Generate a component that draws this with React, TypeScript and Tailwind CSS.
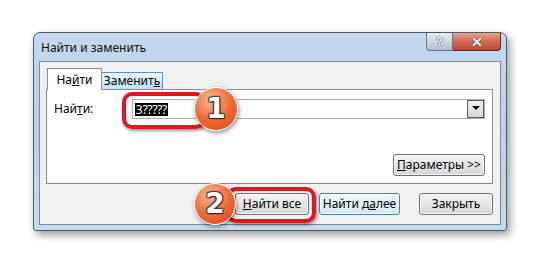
import React from "react";

const font = { fontFamily: '"Noto Sans", "Open Sans", sans-serif' };

function WinButton({
  children,
  focused = false,
  className = "",
}: {
  children: React.ReactNode;
  focused?: boolean;
  className?: string;
}) {
  return (
    <div
      className={`flex items-center justify-center h-[22px] rounded-[3px] border text-[12px] text-black leading-none ${
        focused
          ? "border-[#3c7fb1] bg-gradient-to-b from-[#f3f9fd] via-[#e4f1fb] to-[#d3e8f7]"
          : "border-[#707070] bg-gradient-to-b from-[#f4f4f4] via-[#e8e8e8] to-[#d4d4d4]"
      } shadow-[inset_0_0_0_1px_rgba(255,255,255,0.8)] ${className}`}
    >
      {children}
    </div>
  );
}

function Badge({ n, className }: { n: string; className: string }) {
  return (
    <div
      className={`absolute rounded-full border-[1.5px] border-white bg-[radial-gradient(circle_at_38%_28%,#fcb894_0%,#f26a35_50%,#d8471b_100%)] shadow-[1px_2px_4px_rgba(0,0,0,0.45)] flex items-center justify-center ${className}`}
    >
      <span
        className="text-white font-bold text-[28px] leading-none [text-shadow:0_0_1px_#222,1px_1px_1px_#222,-1px_-1px_1px_#444,1px_-1px_1px_#444,-1px_1px_1px_#444]"
        style={{ fontFamily: '"DejaVu Sans", sans-serif' }}
      >
        {n}
      </span>
    </div>
  );
}

export default function App() {
  return (
    <div className="relative w-[540px] h-[264px] bg-white overflow-hidden" style={font}>
      <div className="pt-[32px] pl-[33px]">
        {/* window */}
        <div className="w-[474px] h-[199px] flex flex-col rounded-t-[7px] rounded-b-[3px] border border-[#4f5966] bg-gradient-to-b from-[#c3d8ee] via-[#b9d0e9] to-[#c6dbef] shadow-[3px_4px_9px_rgba(0,0,0,0.4)]">
          <div className="h-[28px] flex justify-between pl-[7px] pr-[5px]">
            <span className="mt-[6px] text-[12px] text-[#111]">Найти и заменить</span>
            <div className="flex h-[18px]">
              <div className="w-[27px] flex items-center justify-center rounded-bl-[4px] border border-t-0 border-[#6a7584] bg-gradient-to-b from-[#e7edf3] via-[#cdd6e0] to-[#b3bfcc]">
                <span className="text-[13px] font-bold leading-none text-[#f4f6f8] [text-shadow:0_0_1px_#333,0_0_1px_#333]">?</span>
              </div>
              <div className="w-[48px] flex items-center justify-center rounded-br-[4px] border border-l-0 border-t-0 border-[#5a2a22] bg-gradient-to-b from-[#e6a68d] via-[#d06a52] to-[#c24530]">
                <span className="text-[14px] font-bold leading-none text-white [text-shadow:0_0_1px_#222,0_0_1px_#222]">✕</span>
              </div>
            </div>
          </div>

          {/* client area */}
          <div className="mx-[5px] h-[164px] border border-[#7b8898] bg-[#f0f0f0] flex flex-col">
            <div className="pt-[6px] pl-[6px]">
              <div className="flex items-end h-[21px] pl-[1px] relative z-10">
                <div className="h-[22px] w-[55px] -mb-px border border-b-0 border-[#898c95] bg-white flex items-center justify-center text-[12px] text-black">
                  <span>
                    На<span className="underline">й</span>ти
                  </span>
                </div>
                <div className="h-[17px] w-[61px] border border-l-0 border-b-0 border-[#5d8fb8] bg-gradient-to-b from-[#eef7fd] via-[#d6eefc] to-[#bde4f9] flex items-center justify-center text-[12px] text-black">
                  <span>
                    Замени<span>т</span><span className="underline">ь</span>
                  </span>
                </div>
              </div>
              <div className="w-[447px] h-[95px] border border-[#898c95] bg-white flex flex-col px-[7px] pt-[9px]">
                <div className="flex items-center h-[20px]">
                  <span className="w-[78px] text-[12px] text-black">
                    Най<span className="underline">т</span>и:
                  </span>
                  <div className="w-[354px] h-[20px] border border-[#abadb3] bg-white flex items-center justify-between pl-[2px]">
                    <span className="bg-black text-white text-[12px] leading-[13px] px-[1px] tracking-[-0.3px]">3?????</span>
                    <div className="w-[17px] h-[18px] border border-[#5a5a5a] bg-gradient-to-b from-[#f2f2f2] to-[#d6d6d6] flex items-start justify-center pt-[5px]">
                      <div className="w-0 h-0 border-l-[4px] border-r-[4px] border-t-[4px] border-l-transparent border-r-transparent border-t-black" />
                    </div>
                  </div>
                </div>
                <div className="flex justify-end mt-[35px]">
                  <WinButton className="w-[92px] h-[19px]">
                    <span>
                      <span className="underline">П</span>араметры &gt;&gt;
                    </span>
                  </WinButton>
                </div>
              </div>
            </div>

            <div className="flex justify-end pr-[7px] mt-[9px]">
              <WinButton className="w-[74px]">
                <span>
                  <span className="underline">Н</span>айти все
                </span>
              </WinButton>
              <WinButton focused className="w-[81px] ml-[10px]">
                <span>
                  Найти д<span className="underline">а</span>лее
                </span>
              </WinButton>
              <WinButton className="w-[74px] ml-[19px]">Закрыть</WinButton>
            </div>
          </div>
        </div>
      </div>

      {/* annotation overlays */}
      <div className="absolute left-[122px] top-[92px] w-[84px] h-[37px] rounded-[10px] border-[4px] border-[#e4151c] shadow-[1px_2px_3px_rgba(0,0,0,0.4)]" />
      <Badge n="1" className="left-[194px] top-[87px] w-[44px] h-[44px]" />
      <div className="absolute left-[226px] top-[187px] w-[90px] h-[36px] rounded-[10px] border-[4px] border-[#e4151c] shadow-[1px_2px_3px_rgba(0,0,0,0.4)]" />
      <Badge n="2" className="left-[194px] top-[183px] w-[42px] h-[42px]" />
    </div>
  );
}
